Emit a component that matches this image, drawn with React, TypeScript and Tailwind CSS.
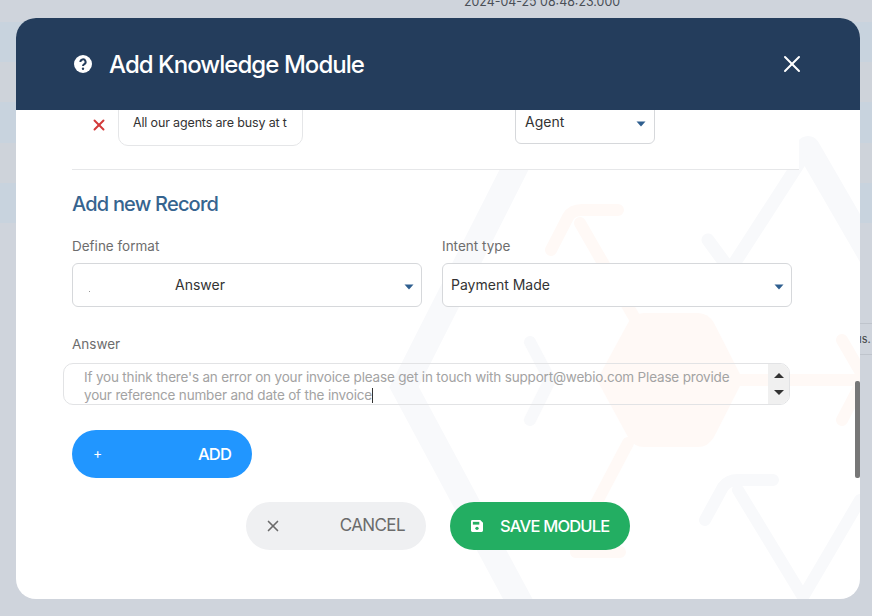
import { X } from "lucide-react";

const font = { fontFamily: "Inter, 'Liberation Sans', sans-serif" };

function Caret({ className = "" }: { className?: string }) {
  return (
    <svg width="10" height="6" viewBox="0 0 10 6" className={className}>
      <path d="M0.5 0.5h9L5 5.5z" fill="#2f5f8f" />
    </svg>
  );
}

// faint hexagon mark behind the form, coordinates are modal-relative
function Watermark() {
  return (
    <svg className="absolute left-0 top-0 h-full w-full" viewBox="0 0 844 581" fill="none">
      <g stroke="#f8f9fb" strokeLinecap="round" strokeLinejoin="round">
        <path d="M504 140 L388 369 L512 600" strokeWidth="26" strokeLinejoin="miter" />
        <path d="M792 130 L870 265" strokeWidth="24" />
        <path d="M785 142 L714 252 L692 222" strokeWidth="13" />
        <path d="M514 324 L534 362 L514 402" strokeWidth="12" />
        <path d="M689 502 L707 469 Q712 462 722 462 H757" strokeWidth="12" />
        <path d="M722 472 L787 579 L844 482" strokeWidth="12" />
      </g>
      <g stroke="#fff9f6" strokeWidth="12" strokeLinecap="round" strokeLinejoin="round">
        <path d="M535 232 L552 199 Q556 192 566 192 H602" />
        <path d="M564 205 L618 299" />
        <path d="M612 425 L574 497 Q566 532 560 534 H604" />
        <path d="M724 362 H844" />
        <path d="M826 322 L848 360 L826 402" />
      </g>
      <path
        d="M628 295 H682 Q692 295 698 305 L727 362 L698 419 Q692 429 682 429 H628 Q618 429 612 419 L581 362 L612 305 Q618 295 628 295Z"
        fill="#fff9f6"
      />
    </svg>
  );
}

function SelectBox({ text, indent = false }: { text: string; indent?: boolean }) {
  return (
    <div className="relative flex h-[44px] items-center rounded-md border border-[#d6d8db] bg-white px-2 pb-[1px] text-[14px] text-[#333]">
      <span className={indent ? "ml-[94px]" : ""}>{text}</span>
      <Caret className="absolute right-[7px] top-[20px]" />
    </div>
  );
}

export default function App() {
  return (
    <div className="relative h-[616px] w-[872px] overflow-hidden bg-[#cfd4dc]" style={font}>
      {/* page behind the modal */}
      <div className="flex flex-col pt-[22px]">
        <div className="h-[40px] bg-[#c8d3de]" />
        <div className="h-[40px] bg-[#ced3da]" />
        <div className="h-[41px] bg-[#c8d3de]" />
        <div className="h-[40px] bg-[#ced3da]" />
        <div className="h-[40px] bg-[#c8d3de]" />
      </div>
      <div className="absolute left-[464px] top-[-7px] text-[12.4px] text-[#4a4f57]">2024-04-25 08:48:23.000</div>
      <div className="absolute right-0 top-[323px] flex h-[32px] w-[12px] items-center border-y border-[#bfc4cc] text-[11px] text-[#444]">
        <span className="ml-[-1px]">ıs.</span>
      </div>

      <div className="absolute left-[16px] top-[18px] flex h-[581px] w-[844px] flex-col overflow-hidden rounded-[20px] bg-white">
        <Watermark />

        <header className="relative z-10 flex h-[92px] shrink-0 items-center bg-[#243d5c] pl-[58px] pr-[54px] text-white">
          <svg width="18" height="18" viewBox="0 0 18 18">
            <circle cx="9" cy="9" r="9" fill="#fff" />
            <path d="M6.4 7a2.6 2.6 0 1 1 3.9 2.2c-.9.5-1.3.9-1.3 1.8" fill="none" stroke="#243d5c" strokeWidth="2" />
            <circle cx="9" cy="13.8" r="1.2" fill="#243d5c" />
          </svg>
          <h1 className="ml-[17px] translate-y-[1px] text-[24px] font-medium tracking-[-0.95px]">Add Knowledge Module</h1>
          <X className="ml-auto" size={28} strokeWidth={1.7} />
        </header>

        <div className="relative flex-1">
          {/* row left over from the scrolled list */}
          <div className="ml-[56px] mr-[61px] flex h-[60px] border-b border-[#e6e7e9] bg-white">
            <X className="ml-[18px] mt-[6px] text-[#d33a3a]" size={18} strokeWidth={2.6} />
            <div className="ml-[10px] mt-[-10px] flex h-[46px] w-[185px] items-center rounded-b-[10px] border border-[#e5e6e8] pl-[14px] text-[12.5px] tracking-[-0.15px] text-[#333]">
              All our agents are busy at t
            </div>
            <div className="relative ml-[212px] mt-[-10px] flex h-[44px] w-[140px] items-center rounded-b-md border border-[#d6d8db] pb-[2px] pl-[9px] text-[14px] text-[#333]">
              Agent
              <Caret className="absolute right-[8px] top-[20px]" />
            </div>
          </div>

          <div className="relative pl-[56px] pr-[68px]">
            <h2 className="mt-[20px] text-[20px] font-medium leading-[28px] tracking-[-0.8px] text-[#36648f]">Add new Record</h2>

            <div className="mt-[20px] grid grid-cols-[350px_350px] gap-x-[20px]">
              <div>
                <label className="block text-[13.5px] leading-[17px] text-[#6d6d6d]">Define format</label>
                <div className="relative mt-[8px]">
                  <SelectBox text="Answer" indent />
                  <span className="absolute left-[17px] top-[28px] h-px w-px bg-[#999]" />
                </div>
              </div>
              <div>
                <label className="block text-[13.5px] leading-[17px] text-[#6d6d6d]">Intent type</label>
                <div className="mt-[8px]">
                  <SelectBox text="Payment Made" />
                </div>
              </div>
            </div>

            <label className="mt-[29px] block text-[13.5px] leading-[17px] text-[#6d6d6d]">Answer</label>
            <div className="relative ml-[-9px] mt-[10px] flex h-[42px] w-[727px] overflow-hidden rounded-[10px] border border-[#e2e3e5]">
              <p className="flex-1 pl-[20px] pt-[4px] text-[13.5px] leading-[18px] tracking-[-0.18px] text-[#a3a3a3]">
                If you think there's an error on your invoice please get in touch with support@webio.com Please provide
                <br />
                your reference number and date of the invoice
                <span className="inline-block h-[15px] w-px bg-[#333] align-[-3px]" />
              </p>
              <div className="flex w-[21px] flex-col items-center justify-center gap-[12px] bg-[#f0f0f0]">
                <svg width="10" height="5" viewBox="0 0 10 5"><path d="M5 0l5 5H0z" fill="#333" /></svg>
                <svg width="10" height="5" viewBox="0 0 10 5"><path d="M0 0h10L5 5z" fill="#333" /></svg>
              </div>
            </div>

            <button className="mt-[25px] flex h-[48px] w-[180px] items-center justify-between rounded-full bg-[#2196ff] px-[21px] text-[16.5px] font-medium tracking-[-0.8px] text-white">
              <span className="-translate-y-[2px] text-[14px] font-normal">+</span>
              ADD
            </button>

            <div className="mt-[24px] flex justify-center gap-[24px] pl-[12px]">
              <button className="flex h-[48px] w-[180px] items-center justify-between rounded-full bg-[#eff0f2] pl-[18px] pr-[21px] text-[17px] tracking-[-0.6px] text-[#6b6b6b]">
                <X size={18} strokeWidth={2.2} />
                CANCEL
              </button>
              <button className="flex h-[48px] w-[180px] items-center rounded-full bg-[#23ae62] pl-[21px] text-[16.5px] font-medium tracking-[-0.8px] text-white">
                <svg width="12" height="12" viewBox="0 0 13 13">
                  <path d="M1.5 0H10l3 3v8.5a1.5 1.5 0 0 1-1.5 1.5h-10A1.5 1.5 0 0 1 0 11.5v-10A1.5 1.5 0 0 1 1.5 0z" fill="#fff" />
                  <rect x="2" y="2" width="7" height="3" fill="#23ae62" />
                  <circle cx="6.5" cy="9" r="1.8" fill="#23ae62" />
                </svg>
                <span className="ml-[17px]">SAVE MODULE</span>
              </button>
            </div>
          </div>
        </div>

        {/* modal scrollbar */}
        <div className="absolute right-0 top-[363px] h-[97px] w-[5px] rounded-[2px] bg-[#777]" />
      </div>
    </div>
  );
}
